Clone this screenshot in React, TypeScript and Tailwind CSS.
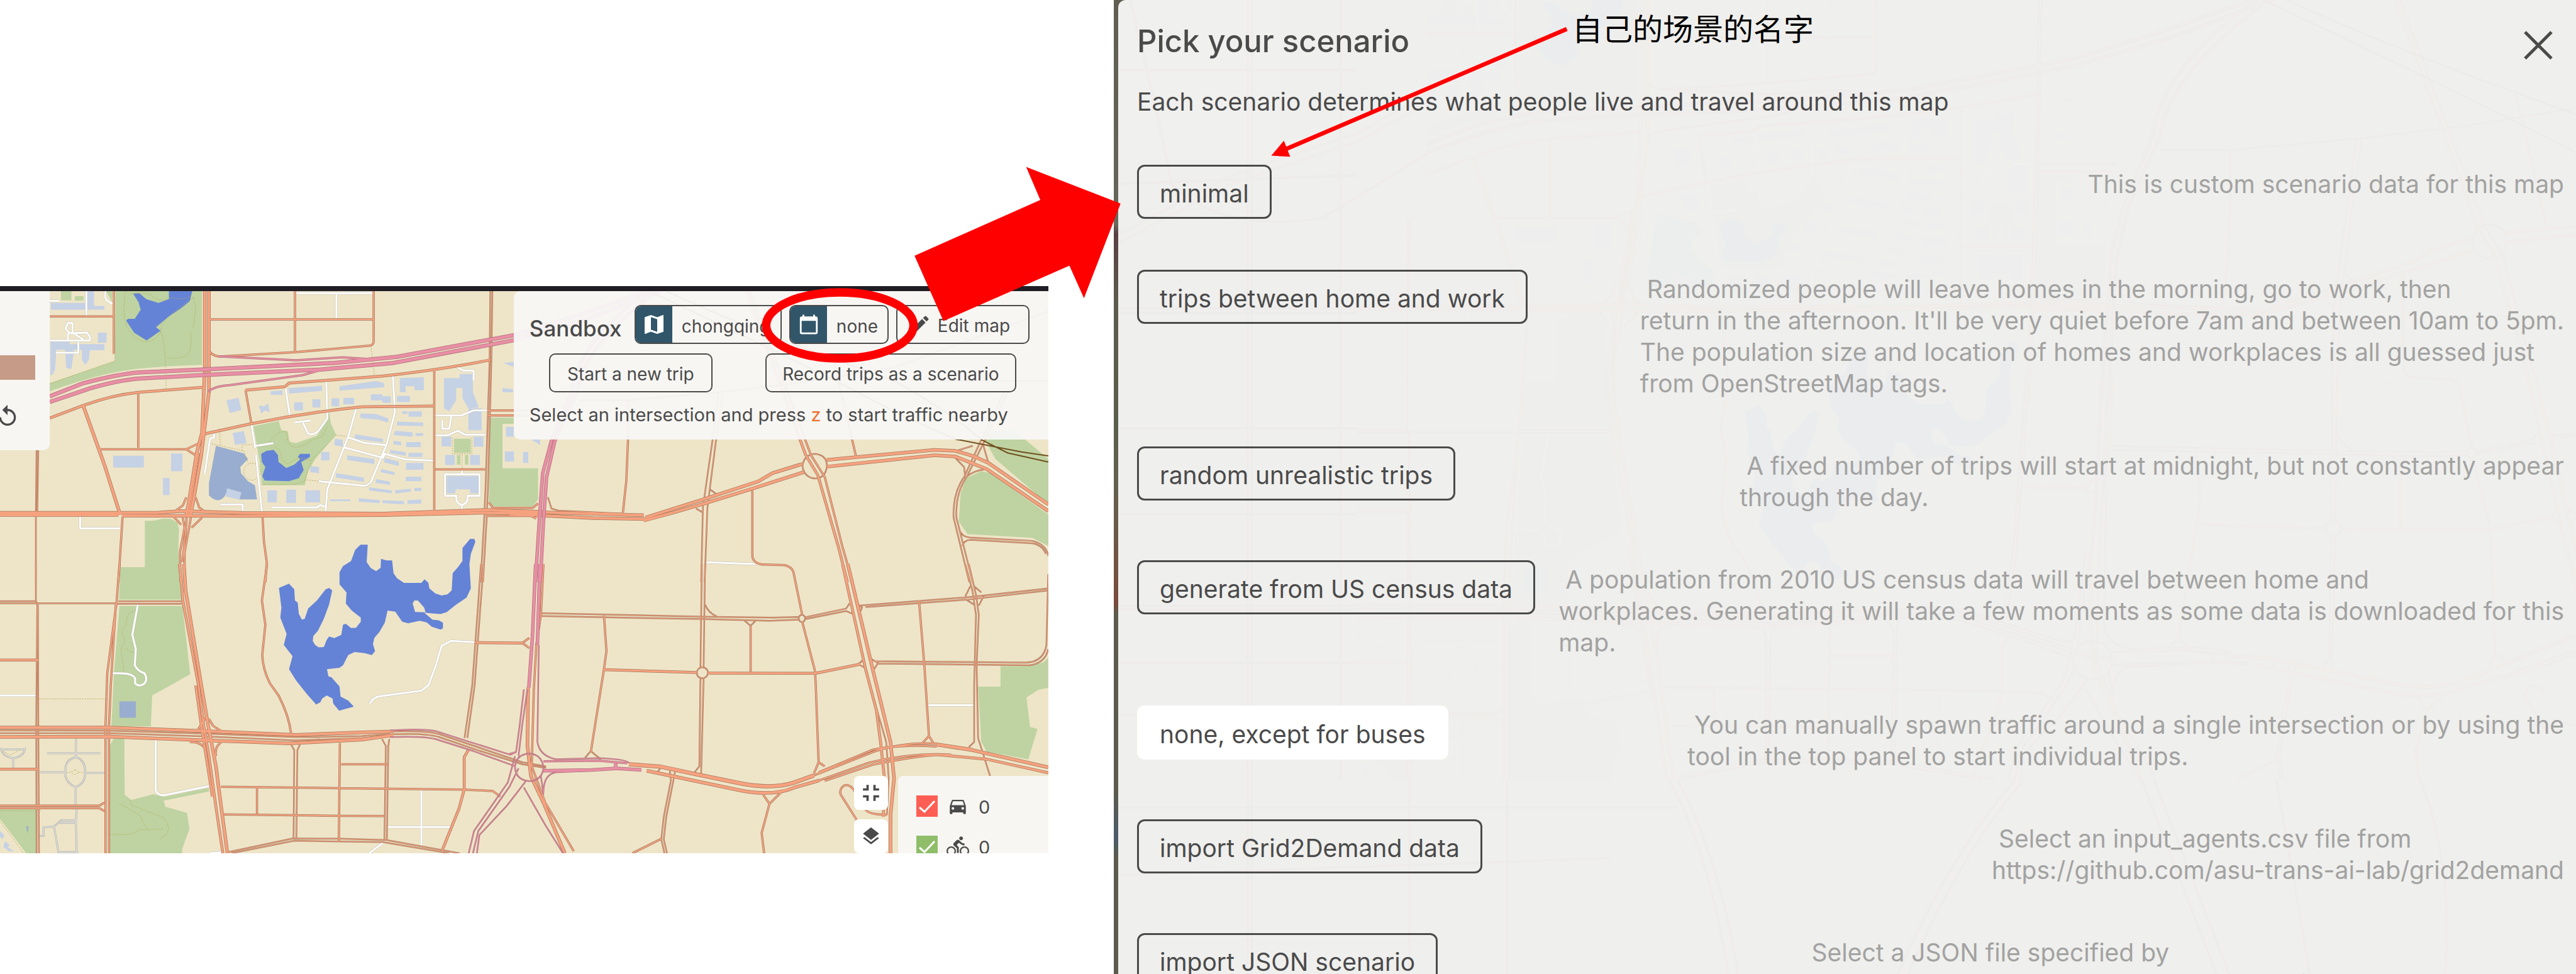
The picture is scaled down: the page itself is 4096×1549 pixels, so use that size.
import React from "react";
import {
  MdCalendarToday,
  MdDirectionsBike,
  MdDirectionsCar,
  MdEdit,
  MdFullscreenExit,
  MdLayers,
  MdMap,
  MdReplay,
} from "react-icons/md";

/* ------------------------------------------------------------------ map */

// The map is drawn as four tiles; each tile has its own local coordinates.
const TILES = {
  nw: "translate(0 460) scale(.57398 .33333)",
  ne: "translate(840 460) scale(.57398 .33333)",
  sw: "translate(0 930) scale(.57398 .33333)",
  se: "translate(840 930) scale(.58673 .33333)",
};
type Tile = keyof typeof TILES;

const GREENS: [Tile, string][] = [
  ["nw", "M332 60H580V425Q420 435 370 450Q280 470 143 555V515L330 405Z"],
  ["nw", "M175 60H205V105H175ZM215 85H240V107H215ZM305 60H322V115Z"],
  ["nw", "M728 728L800 702L808 748L826 752L832 805L850 812L910 775L940 700L945 655L950 715L965 770L905 890L885 950L875 1020H752L745 900Z"],
  ["nw", "M1304 790H1352V860H1304ZM1312 870h10v48h-10zM1335 870h10v48h-10z"],
  ["nw", "M1408 686H1475V716H1443V936H1545V1090L1530 1125H1415L1404 1105Z"],
  ["nw", "M416 1196H440L465 1186H490L510 1205L514 1240Q510 1350 515 1410L522 1586H342L345 1425H416Z"],
  ["sw", "M343 207H524L546 545L437 650L433 802H320L327 540Z"],
  ["sw", "M328 857H357L358 1140L377 1167L440 1138L470 1152L600 1107V1125L470 1170L475 1200L537 1230L544 1310L523 1410V1430H315V900Z"],
  ["sw", "M0 1213H103V1430H75L0 1260Z"],
  ["ne", "M1350 750H1450L1547 890V1115L1395 890Z"],
  ["ne", "M1310 985L1355 950L1380 960L1547 1165V1320L1500 1280L1315 1262L1290 1200L1295 1060Z"],
  ["se", "M1513 463V612L1485 622L1452 660L1462 805L1483 815L1457 966L1340 927L1325 880L1316 606H1379V505H1460L1500 485Z"],
];

const WATERS: [Tile, string][] = [
  ["nw", "M382 72L400 70L420 100L455 118L485 100V60H552L545 110L520 145L485 185L448 238L461 256L421 304L385 265L362 205L368 197L387 197L404 152L398 115Z"],
  ["nw", "M750 865L765 850L786 845L798 870L800 905L822 935L845 918L862 892L855 880L862 865H890V880L865 905L872 945L858 985L830 1000L760 997L753 975L762 930L752 905Z"],
  ["sw", "M1035 -96H1056L1053 -10L1065 20L1080 35L1093 18L1094 -26L1110 -18L1126 -18L1130 45L1140 70L1160 93H1210L1219 75L1230 92L1233 120L1250 145L1268 155L1285 150L1297 130L1300 45L1315 15L1328 -15V-80L1350 -125L1362 -125L1365 -110L1352 -50L1348 0L1352 120L1340 165L1310 200L1282 238L1265 247L1240 244L1218 240L1242 275L1260 278L1272 290V318L1265 324L1240 310L1225 288L1205 280L1172 293L1155 285L1135 235L1113 230L1105 290L1090 335L1075 365L1071 395L1077 430L1068 450L1045 440L1018 435L1000 450L985 500L975 513L939 520L943 555L952 560L975 605L978 655L1000 675L1016 705L974 725L957 690L955 665L938 650L925 665L920 683L908 695L880 640L850 575L830 520L840 455L815 400L823 345L805 265L808 215L801 118L830 97L845 125L847 180L855 190L858 245L867 275L875 270L885 220L910 180L935 125L945 118L954 130L945 200L930 270L913 330L900 355L898 380L905 400L915 412L930 410L938 375L945 358L960 366L980 350L985 300L993 295L1008 316L1022 315L1036 285V265L1010 230L993 195L995 140L975 100V40L985 10L1008 -15L1020 -70ZM1185 195L1190 180L1200 180L1218 215L1222 238L1192 237Z"],
];

const POOLS: [Tile, string][] = [
  ["nw", "M620 825L700 862L712 890L690 930L692 960L712 1000L732 1020L738 1090H685L655 1040L645 1075Q625 1115 600 1070V1010Z"],
  ["sw", "M343 679H390V760H343Z"],
  ["sw", "M75 1297h7l-3 36z"],
];

const BUILDINGS: [Tile, string][] = [
  ["nw", "M146 118H250V60H270V133H300V152H146ZM145 310H200V322H300V352H258L255 400L245 425L235 400V350H213L205 445L190 440L187 350H162L158 450L150 475H145ZM281 265h25v50h-25zM325 874h88v58h-88zM491 863h33v88h-33zM468 984h19v84h-19z"],
  ["nw", "M650 600L685 588L693 648L660 663ZM743 625L758 630L770 615L772 640L775 660L762 650L750 665ZM777 555l34-4v22h-34zM828 540L925 528V553L830 567ZM975 530L1080 505L1103 515V535L975 552ZM1148 490L1217 486V550H1190V530H1165V560H1148Z"],
  ["nw", "M845 610h25v40h-25zM897 595h23v40h-23zM952 590h22v40h-22zM986 588h31v32h-31zM1065 570H1098V580H1122V612H1098V600H1065ZM1140 578h37v30h-37zM1275 490H1320V470H1358V560L1375 635L1345 640L1328 590V540H1310V600L1290 655L1275 640ZM1345 640h38v108h-38z"],
  ["nw", "M1268 780h28v48h-28zM1360 780h28v50h-28zM1278 870h28v50h-28zM1350 870h28v50h-28zM1283 975H1375V1060H1350V1040H1308V1060H1283ZM668 762L700 752L708 812L675 820ZM652 1035L693 1055L688 1092L648 1075ZM768 1045h27v60h-27zM822 1042h28v65h-28zM877 1045h42v60h-42z"],
  ["nw", "M1035 665L1080 668L1115 690V710L1085 695L1035 688ZM1155 655h15v12h-15zM1173 655h38v26h-38zM1140 705l75 5v18l-75-3zM1135 750l50 8v22l-55-8zM1193 762h22v14h-22zM1130 800l22 5v18l-22-5zM1166 806h42v25h-42zM1120 845l45 12v18l-45-14zM1173 860h40v20h-40zM1105 885l40 18v22l-42-18zM1166 910h50v33h-50zM1095 940l38 16v14l-40-14zM1165 978h45v22h-45zM1080 990l40 12v16l-42-10zM1060 1030l65 16v14l-65-14zM1135 1045l45-8v14l-45 10zM1190 1033h20v16h-20z"],
  ["nw", "M1020 768L1100 790V808L1018 790ZM997 872L1075 890V915L997 895ZM965 960L1045 982V1003L965 982ZM948 1090h58v9h-58zM1030 1085l60 8v16l-60-8zM1098 1095l62 3v16l-62-6zM1170 1095l40-5v20l-40 3zM962 790l22 5v35l-24-8zM922 855h24v42h-24zM892 925l24 4v32l-26-6zM1453 732h22v48h-22zM1450 853h26v50h-26zM1502 855h15v55h-15zM1525 793h26v28zM1443 540l30 5v15h-30zM1445 415l30-5v25z"],
  ["sw", "M0 1320l12 20l-4 20l-8-10zM14 1370l14 20l-6 10l18 20h-14l-16-20z"],
];

const WHITE_ROADS: [Tile, string][] = [
  ["nw", "M302 60V90Q305 115 325 122M248 60V185M848 70H1073M966 70V195M143 304H258V285L250 265L200 268L188 245L195 218H208V265L240 300M195 268V304M143 108H170M160 365H225V310"],
  ["nw", "M820 540L832 675M937 508L940 690L915 750Q900 775 885 765L870 710M845 710L892 700M1128 475L1134 660L1110 820L1065 1005Q1055 1025 1040 1022L915 1000M1023 640L1000 780L940 1040L935 1148M1000 783L1045 810L1108 822M988 833L1100 885L1105 865L1165 893L1245 898"],
  ["nw", "M722 716L733 835M735 825L785 812M735 870L752 1150M633 1115H697V1150M780 1130H910L920 1118L937 1128M588 962L603 790L615 782V765M1310 433L1330 453H1360V503M1250 675H1325L1360 650H1398M1250 773H1285L1315 750L1335 770H1395M1270 698V740H1290L1296 680"],
  ["nw", "M1327 945V965M1278 1072V966H1377V1072H1343Q1345 1110 1326 1118Q1308 1110 1310 1072H1278M1326 1118V1140M230 1160V1233H346"],
  ["sw", "M396 197L380 350L390 420L387 500Q395 530 415 540Q425 570 415 590Q400 610 388 590V565Q380 540 345 540H317M0 650H103M1062 690Q1068 665 1085 655L1210 626L1230 600L1250 510L1268 405L1295 380L1362 386"],
  ["sw", "M447 867V1120Q455 1145 470 1143L600 1098M1210 1117V1392M1113 1300H1293M1060 1430L1100 1378M602 1430L640 1425"],
  ["ne", "M565 1401L705 1410"],
  ["se", "M1175 698H1303"],
];

const GREY_PATHS: [Tile, string][] = [
  ["sw", "M218 855V955Q190 965 188 1010V1050Q195 1090 217 1102Q240 1090 244 1050V1010Q240 965 218 955M217 1102V1195M135 936H288M115 1030H188M244 1033H303M3 908Q5 950 38 960Q70 950 72 908M38 960V1012M8 916H70M220 1208L218 1280L220 1430M113 1345H125V1302L155 1298L175 1268H220M170 1280H220M155 1298L168 1425H225"],
];

const TRAILS: [Tile, string][] = [
  ["nw", "M360 60Q350 180 365 240Q390 310 421 312Q450 300 461 262Q475 290 477 540M461 262Q460 220 485 185L555 90M547 265Q552 340 540 370Q520 400 480 388M375 75Q430 60 440 90Q470 120 490 90Q530 110 550 80M555 90L562 140L555 245M330 375V405L143 518M1065 330L1075 475M630 740L633 820M608 815L700 850L712 910M695 850V820L735 818"],
  ["nw", "M724 910Q748 915 748 953Q745 990 724 995Q702 990 700 953Q702 915 724 910M775 805Q800 740 825 760Q820 830 850 832Q880 825 890 800L925 780L940 730M790 830Q810 850 808 890L825 915L858 885L895 895M965 772L995 778M965 772L895 895L875 992L915 1000M752 1015H850L878 995M1300 785V865H1355V785M1327 868V940"],
  ["sw", "M390 230Q360 240 363 300Q340 330 360 380Q340 420 352 470L356 540M360 415L375 435L388 437M113 667H303M343 1185L400 1240L422 1310M375 1167V1190L470 1255L485 1300L480 1335L458 1362M315 1337H375L400 1315L470 1310M0 1220H118M0 1270L68 1430M190 1030H205M225 1030H242M215 1018Q225 1020 224 1032Q215 1048 206 1032Q206 1020 215 1018M8 925L30 945L55 920"],
];

const ORANGE: [Tile, number, string][] = [
  ["nw", 1, "M105 845L103 1160V1500M110 845L107 1160"],
  ["nw", 2, "M143 185H328M847 60V362M603 200H1073M1073 60V310Q1073 325 1060 330L850 362L640 383Q612 385 603 360M397 562V835M285 842H535L568 815M535 842L560 870M705 550L722 716M1247 448V1155M1250 942H1393M1400 650H1568M1400 675H1568"],
  ["nw", 2, "M327 60V370M754 1178L758 1300L766 1400L762 1500M1395 1172H1525L1540 1185M1404 1105L1415 1132H1530L1545 1110"],
  ["nw", 3, "M143 688L240 625Q320 575 400 560L583 536M590 765L720 716Q880 660 1040 632L1245 628M705 550L818 533L830 515L1100 480Q1280 445 1408 400"],
  ["nw", 1, "M1408 60L1406 400L1395 1000L1390 1200L1380 1500M1414 60L1411 400L1402 1000L1397 1200L1387 1500"],
  ["nw", 4, "M238 622L300 920L345 1165"],
  ["nw", 2, "M352 1175L340 1500"],
  ["nw", 4, "M588 60V450L580 760L565 860L545 1075L535 1170"],
  ["nw", 4, "M600 60V560L590 700L578 870L557 1080L547 1170"],
  ["nw", 2, "M570 860L551 1075L541 1170M525 1180L530 1230L517 1350L518 1500M548 1180L543 1230L530 1350V1500M536 1180L533 1250L524 1400M535 1080L525 1120L505 1145M562 1080L572 1130L588 1150M498 1175L520 1215M580 1180L550 1230"],
  ["nw", 4, "M0 1156H450L520 1148L700 1157L1100 1160L1395 1142L1568 1152"],
  ["nw", 4, "M0 1167H340"],
  ["nw", 4, "M350 1170L700 1172L1100 1168L1390 1156L1568 1162"],
  ["sw", 1, "M0 183H103M0 194H330M340 184H522M332 196H522M103 0V180L107 200L104 800L105 1430M109 200L110 800L112 1430M1389 0L1380 200L1363 600L1342 860M1381 0L1373 200L1356 600L1334 860"],
  ["sw", 2, "M343 0L335 185L308 540L303 800V1430M333 190L318 600L313 800V1430"],
  ["sw", 3, "M515 0L520 70L525 180L570 600L585 800L600 950L620 1200L640 1430"],
  ["sw", 4, "M528 0L533 130L578 600L598 800L620 1000L635 1200L653 1430"],
  ["sw", 3, "M562 600L580 820L592 950L610 1150"],
  ["sw", 2, "M767 0L762 60L752 180L762 300L753 450Q755 520 775 590L800 650Q830 750 836 840"],
  ["sw", 4, "M0 808H310L580 825L850 845L1040 832L1130 828"],
  ["sw", 1, "M0 822L310 824L580 838L850 856L1040 850L1120 840M0 836L310 836L580 852L850 872L1040 860L1120 850"],
  ["sw", 4, "M0 855L320 853L560 870L830 887L1040 868L1130 846"],
  ["sw", 1, "M1130 828Q1220 824 1260 840L1380 910L1500 980L1568 1000M1130 842Q1220 835 1260 855L1380 925L1500 990L1568 1008"],
  ["sw", 3, "M0 475H110M0 1014H110M1365 388L1500 391M1345 920L1333 955V1115L1318 1210L1270 1415"],
  ["sw", 2, "M1500 390L1520 365M1500 390L1520 415M0 1195H285L300 1180M0 1207H285L300 1222"],
  ["sw", 2, "M976 885L973 1370M980 990H1113M635 1101L975 1108L1330 1115L1415 1122L1437 1150M738 1105V1235M642 1238L970 1245L1103 1246"],
  ["sw", 1, "M835 890L845 920L843 1357M862 890L854 920L851 1357M1097 865L1108 900L1104 1365M1118 865L1115 900L1111 1365M655 1425L840 1357L975 1358L1110 1365L1320 1430M665 1430L845 1368L1100 1375L1290 1430"],
  ["sw", 2, "M590 760L568 820M600 765L612 800L635 825M545 880Q590 880 592 940M640 875Q615 900 620 950"],
  ["se", 4, "M52 610L50 900L60 1050L95 1180L155 1430"],
  ["se", 2, "M95 0L88 250L75 400L68 620L62 1000L100 1180L180 1420"],
  ["se", 1, "M90 243L540 260L740 265L810 262M90 257L540 272L730 280L810 275M821 250Q830 255 830 268Q829 285 821 287Q812 283 812 268Q812 255 821 250M832 262L945 220L955 195M832 272L945 232L962 245"],
  ["se", 2, "M265 255L272 430L265 520L228 930"],
  ["se", 3, "M265 522L525 536M558 539L860 540L985 495"],
  ["se", 1, "M228 925L212 958M228 925L256 965M541 510Q557 515 557 537Q556 563 541 565Q526 563 526 537Q526 515 541 510M540 0L536 510M549 0L545 510M536 565L533 1000L520 1028M545 565L538 1035M660 280L677 305L690 282M549 200Q560 245 582 258"],
  ["se", 2, "M677 305V535M822 285L858 530L860 600L868 980L855 1035M868 980L885 1000"],
  ["se", 3, "M935 0L1000 520L1030 720L1042 880L1053 1060L1050 1250"],
  ["se", 4, "M950 0L1020 520L1070 880L1080 1060L1070 1240V1430"],
  ["se", 1, "M1020 650L1058 880L1065 1060L1060 1240M985 205L1280 165L1513 120M1000 213L1290 175L1513 130M975 195L990 215L985 235M1280 0L1300 130L1310 250L1305 600V880L1290 905M1290 0L1310 150L1318 250L1312 500L1316 860L1350 1050M1280 160L1294 110M1325 140L1305 110M1285 178L1308 205M1332 158L1318 205"],
  ["se", 2, "M1150 180L1165 500L1178 850M1178 850L1160 885M1178 850L1190 885"],
  ["se", 1, "M1025 480L1200 483L1450 487Q1500 485 1508 400L1513 50M1035 492L1460 500Q1505 490 1513 420M1012 465L1035 490L1022 525M995 470L980 495L1000 515"],
  ["se", 5, "M335 990L425 1002L520 1038L650 1085Q740 1115 800 1080L855 1045"],
  ["se", 2, "M855 1045L1020 930Q1100 880 1200 888L1300 915M868 1030L1020 918Q1100 890 1200 902"],
  ["se", 4, "M1200 893L1300 920L1513 1005"],
  ["se", 4, "M385 1022L650 1120Q740 1150 800 1105L870 1070"],
  ["se", 2, "M870 1070L1010 982Q1140 930 1240 943M885 1072L1020 992Q1140 950 1210 943"],
  ["se", 3, "M1200 942L1340 965L1513 1032"],
  ["se", 1, "M450 1020L453 1070L433 1250L426 1360L435 1430M465 1020L460 1070L440 1250L433 1360L442 1430M425 1005L415 1030L390 1022"],
  ["se", 2, "M425 1360L345 1430M712 1140L730 1185L708 1330L715 1430M762 1130L730 1185M975 1265L930 1140Q925 1115 940 1095Q955 1085 970 1125M1000 1215Q1010 1240 1060 1240"],
  ["ne", 2, "M697 1045V1370Q700 1410 730 1412L790 1415Q812 1425 815 1450L840 1660M930 400L995 880M340 600V793L335 1000L325 1160"],
  ["ne", 4, "M840 915L755 960L715 1000L565 1085L390 1180"],
  ["ne", 4, "M845 955L700 1035L560 1110L470 1155L385 1195"],
  ["ne", 4, "M0 1150L110 1155L385 1168M0 1162L240 1183L390 1187"],
  ["ne", 1, "M876 865Q911 870 911 925Q908 985 876 987Q845 980 841 925Q845 870 876 865M600 560L583 793L555 1130L550 1500M612 560L593 793L568 1130L560 1500M575 1040L595 1065M535 1135L555 1155"],
  ["ne", 4, "M910 895L1000 880L1220 845L1280 850L1330 875L1375 910L1547 1115"],
  ["ne", 4, "M912 928L1220 872L1280 878L1370 940L1547 1148"],
  ["ne", 3, "M680 60L850 870L885 970L945 1330L970 1500"],
  ["ne", 2, "M690 60L865 870L905 980L955 1320L985 1500"],
  ["ne", 1, "M1420 560L1355 793L1305 980Q1272 1060 1275 1180L1320 1500M1430 560L1366 793L1312 980Q1280 1060 1283 1180L1330 1500M1295 1250Q1300 1275 1320 1278L1500 1295Q1540 1310 1547 1370M1300 1320Q1305 1290 1325 1290L1500 1307Q1530 1315 1540 1360M1283 850L1330 825M1280 885L1305 930L1308 975M1358 810L1375 910M1375 940Q1330 945 1308 985"],
  ["ne", 1, "M200 600H340L600 560L800 520L1100 440L1547 160M1547 505H1200M110 1080L120 1135L140 1145L320 1160"],
];

const PINK: [Tile, number, string][] = [
  ["nw", 5, "M143 580L240 515Q340 470 400 462L580 448L960 415L1140 385L1475 278L1660 180L1860 60"],
  ["nw", 5, "M143 608L260 540Q340 500 400 492L580 475L920 448L1130 415L1475 303L1680 200L1900 60"],
  ["nw", 2, "M628 383L850 402L985 387L1065 397M598 558Q615 530 660 525L870 475L915 453"],
  ["ne", 4, "M400 60Q200 300 180 550L120 800L95 960L85 1200L74 1500"],
  ["ne", 4, "M425 60Q215 320 195 550L130 800L106 980L97 1200L88 1500"],
  ["se", 4, "M73 0L64 360L54 610"],
  ["se", 4, "M85 0L78 400"],
  ["se", 1, "M55 937Q90 940 95 1005Q92 1070 55 1073Q18 1068 15 1005Q18 940 55 937M82 400L78 880Q85 950 130 965L250 960Q330 965 335 985M40 620L28 800L18 930L0 945M50 620L35 800L25 950M95 1130Q95 1040 130 1030L230 1022M15 950L-5 1080L-100 1320L-115 1430M25 1010L0 1100L-88 1320L-103 1430M45 1075L-10 1200L-85 1340L-92 1430M40 1105L100 1290L150 1430M88 1050L95 1140"],
  ["se", 2, "M95 975L250 972L330 985"],
  ["se", 4, "M95 1022L230 1018L300 1010L370 1018M298 985V1010"],
  ["sw", 1, "M1120 823Q1200 812 1250 825L1350 880L1460 940L1480 930M1120 856Q1210 850 1250 865L1360 925L1480 1000"],
];

const RAILS: [Tile, string][] = [
  ["ne", "M400 60Q700 300 1000 560Q1150 700 1283 793L1470 855L1547 875M450 60Q700 260 1100 500Q1250 640 1355 795L1430 860L1547 905"],
];

function Areas({ items, fill }: { items: [Tile, string][]; fill: string }) {
  return (
    <g fill={fill} fillRule="evenodd">
      {items.map(([t, d], i) => (
        <path key={i} d={d} transform={TILES[t]} />
      ))}
    </g>
  );
}

function Lines({ items, stroke, width, dash }: { items: [Tile, string][]; stroke: string; width: number; dash?: string }) {
  return (
    <g fill="none" stroke={stroke} strokeWidth={width} strokeDasharray={dash}>
      {items.map(([t, d], i) => (
        <path key={i} d={d} transform={TILES[t]} vectorEffect="non-scaling-stroke" />
      ))}
    </g>
  );
}

function Roads({ items, edge, fill }: { items: [Tile, number, string][]; edge: string; fill: string }) {
  return (
    <g fill="none" strokeLinejoin="round">
      {items.map(([t, w, d], i) => (
        <path key={`e${i}`} d={d} transform={TILES[t]} stroke={edge} strokeWidth={w + 1.5} vectorEffect="non-scaling-stroke" />
      ))}
      {items.map(([t, w, d], i) => (
        <path key={`f${i}`} d={d} transform={TILES[t]} stroke={fill} strokeWidth={w} vectorEffect="non-scaling-stroke" />
      ))}
    </g>
  );
}

function MapArt() {
  return (
    <g>
      <Areas items={GREENS} fill="#bed3a1" />
      <Areas items={WATERS} fill="#6483d7" />
      <Areas items={POOLS} fill="#98adcf" />
      <Areas items={BUILDINGS} fill="#c5d1e5" />
      <Lines items={TRAILS} stroke="#b9ad62" width={1} dash="2 2" />
      <Lines items={GREY_PATHS} stroke="#b5b5b0" width={3} />
      <Lines items={GREY_PATHS} stroke="#f1f1ee" width={1} />
      <Lines items={WHITE_ROADS} stroke="#bdbbb0" width={4} />
      <Lines items={WHITE_ROADS} stroke="#ffffff" width={3} />
      <Roads items={ORANGE} edge="#a3775c" fill="#f7a27f" />
      <Roads items={PINK} edge="#ad6f78" fill="#e98fa5" />
      <Lines items={RAILS} stroke="#70501f" width={2} />
    </g>
  );
}

// Streets that lie beyond the edges of the detailed tiles.
function OuterStreets() {
  return (
    <g fill="none" stroke="#c99a86" strokeWidth="3">
      <path d="M-270 480Q-240 600 -220 700Q-160 760 -40 740L90 660M-130 480V1640M-125 480V1640M-20 480V1407M-283 565H0M-283 700L0 690M-283 848H0M-283 853H0M-283 990H0M-283 1092H0M-283 1200H0M-283 1205H0M-283 1268H0M-283 1330H0M-283 1440H380M-283 1520L300 1500M62 1407V1640M178 1407V1640M370 1407Q420 1500 440 1640M380 1407Q430 1500 452 1640M780 1407Q700 1500 640 1640M790 1407Q712 1500 652 1640M930 1407L1020 1640M945 1407L1035 1640M1090 1407L1130 1640M1260 1407Q1300 1500 1290 1640M1465 1407V1640" />
      <path d="M-283 760L-150 690L0 640L90 590M-283 770L-150 700L0 650L90 600" stroke="#e98fa5" />
    </g>
  );
}

/* ------------------------------------------------------------- left side */

const outline = "rounded-[10px] border-2 border-[#4a4a4a] text-[28px] leading-[36px] text-[#4a4a4a]";

function SandboxPanel() {
  return (
    <section
      aria-label="Sandbox"
      className="absolute top-0 right-0 w-[51%] rounded-l-[10px] bg-[#f7f7f5]/95 pt-[22px] pb-[19px] pl-[25px] text-[#4a4a4a]"
    >
      <div className="flex items-center">
        <h2 className="w-[167px] pt-3 text-[35px] leading-[44px] font-medium">Sandbox</h2>
        <div className="flex gap-3">
          <button className={`${outline} flex h-[62px] w-[234px] items-stretch overflow-hidden`}>
            <span className="flex w-[58px] items-center justify-center bg-[#31566a]">
              <MdMap className="size-[40px] text-white" />
            </span>
            <span className="pt-3.5 pl-[15px]">chongqing</span>
          </button>
          <button className={`${outline} flex h-[62px] w-[158px] items-stretch overflow-hidden`}>
            <span className="flex w-[58px] items-center justify-center bg-[#31566a]">
              <MdCalendarToday className="size-[34px] text-white" />
            </span>
            <span className="pt-3.5 pl-[15px]">none</span>
          </button>
          <button className={`${outline} flex h-[62px] w-[212px] items-center gap-2.5 pl-[18px]`}>
            <MdEdit className="size-[36px]" />
            <span className="pt-1">Edit map</span>
          </button>
        </div>
      </div>
      <div className="flex gap-[84px] pt-[15px] pl-[31px]">
        <button className={`${outline} h-[62px] w-[260px] pt-1`}>Start a new trip</button>
        <button className={`${outline} h-[62px] w-[399px] pt-1`}>Record trips as a scenario</button>
      </div>
      <p className="pt-4 text-[29px] leading-[40px] whitespace-nowrap">
        Select an intersection and press <span className="text-[#ee702e]">z</span> to start traffic nearby
      </p>
    </section>
  );
}

function LayerToggle({ label, color, icon }: { label: string; color: string; icon: React.ReactNode }) {
  return (
    <div className="flex h-[34px] items-center text-[#4a4a4a]">
      <label className="relative block size-[34px]">
        <input type="checkbox" defaultChecked aria-label={label} className={`block size-[34px] appearance-none ${color}`} />
        <svg viewBox="0 0 34 34" className="pointer-events-none absolute inset-0 size-full">
          <path d="M5 19L13 26L29 9" fill="none" stroke="#fff" strokeWidth="3" />
        </svg>
      </label>
      <span className="ml-[14px] flex w-[36px] justify-center">{icon}</span>
      <span className="ml-[15px] pt-1 text-[29px] leading-[34px]">0</span>
    </div>
  );
}

function MapWindow() {
  return (
    <section aria-label="Map" className="relative overflow-hidden border-t-8 border-[#201d24] bg-[#eee5c8]">
      <svg viewBox="0 480 1728 927" className="block w-full" role="img" aria-label="Street map">
        <MapArt />
      </svg>

      <aside className="absolute top-0 left-0 flex h-[253px] w-[79px] flex-col rounded-br-[10px] bg-[#f7f7f5]/95 pt-[102px]">
        <div className="h-[39px] w-[56px] bg-[#c69c88]" />
        <button aria-label="Reset" className="mt-[38px] -ml-[8px] w-[40px]">
          <MdReplay className="size-[40px] text-[#4a4a4a]" />
        </button>
      </aside>

      <SandboxPanel />

      <div className="absolute right-0 bottom-0 flex h-[123px] w-[309px] gap-4">
        <div className="flex w-[54px] shrink-0 flex-col gap-[15px]">
          <button aria-label="Zoom to fit" className="flex size-[54px] items-center justify-center rounded-lg bg-white">
            <MdFullscreenExit className="size-[44px] text-[#4a4a4a]" />
          </button>
          <button aria-label="Layers" className="flex size-[54px] items-center justify-center rounded-lg bg-white">
            <MdLayers className="size-[34px] text-[#4a4a4a]" />
          </button>
        </div>
        <div className="flex grow flex-col gap-[30px] overflow-hidden rounded-tl-lg bg-[#f7f7f5]/95 pt-[31px] pl-[29px]">
          <LayerToggle label="Cars" color="bg-[#ff5e54]" icon={<MdDirectionsCar className="size-[34px]" />} />
          <LayerToggle label="Bikes" color="bg-[#8fbd69]" icon={<MdDirectionsBike className="size-[36px]" />} />
        </div>
      </div>
    </section>
  );
}

/* ------------------------------------------------------------ right side */

const SCENARIOS: { name: string; lines: string[]; current?: boolean }[] = [
  { name: "minimal", lines: ["This is custom scenario data for this map"] },
  {
    name: "trips between home and work",
    lines: [
      " Randomized people will leave homes in the morning, go to work, then",
      "return in the afternoon. It'll be very quiet before 7am and between 10am to 5pm.",
      "The population size and location of homes and workplaces is all guessed just",
      "from OpenStreetMap tags.",
    ],
  },
  {
    name: "random unrealistic trips",
    lines: [" A fixed number of trips will start at midnight, but not constantly appear", "through the day."],
  },
  {
    name: "generate from US census data",
    lines: [
      " A population from 2010 US census data will travel between home and",
      "workplaces. Generating it will take a few moments as some data is downloaded for this",
      "map.",
    ],
  },
  {
    name: "none, except for buses",
    current: true,
    lines: [
      " You can manually spawn traffic around a single intersection or by using the",
      "tool in the top panel to start individual trips.",
    ],
  },
  {
    name: "import Grid2Demand data",
    lines: [" Select an input_agents.csv file from", "https://github.com/asu-trans-ai-lab/grid2demand"],
  },
  {
    name: "import JSON scenario",
    lines: [" Select a JSON file specified by", "https://a-b-street.github.io/docs/tech/dev/formats/scenarios.html"],
  },
];

function ScenarioPicker() {
  return (
    <section
      aria-labelledby="picker-title"
      className="overflow-hidden bg-[linear-gradient(#5f5e50_0%,#66655a_21%,#6a6a5c_23%,#5a3f44_24%,#5c5b4c_31%,#5a5f4a_44%,#63614f_50%,#7a4b3a_62%,#5c5b4c_63%,#5c5b4c_81%,#4a5b6a_86%,#5c5b4c_88%,#5c5b4c_100%)] pl-[7px]"
    >
      <div className="relative h-full overflow-hidden rounded-tl-[12px] bg-[#f0f0ef] pt-9 pr-[19px] pl-[30px]">
        <svg
          viewBox="1843 0 2403 1606"
          preserveAspectRatio="xMinYMin slice"
          className="pointer-events-none absolute inset-0 size-full opacity-3"
          aria-hidden="true"
        >
          <rect x="1843" width="2403" height="1606" fill="#eee5c8" />
          <g transform="translate(2237 -670) scale(1.39)">
            <MapArt />
            <OuterStreets />
          </g>
        </svg>
        <div className="relative flex flex-col gap-[75px]">
          <header className="flex flex-col gap-[41px] text-[#4a4a4a]">
            <div className="flex items-start justify-between">
              <h1 id="picker-title" className="text-[49px] leading-[60px] font-medium">
                Pick your scenario
              </h1>
              <button aria-label="Close" className="mt-[13px] mr-[18px]">
                <svg viewBox="0 0 46 46" className="size-[46px]">
                  <path d="M2 2L44 44M44 2L2 44" stroke="#4a4a4a" strokeWidth="5" />
                </svg>
              </button>
            </div>
            <p className="text-[39px] leading-[50px]">
              Each scenario determines what people live and travel around this map
            </p>
          </header>
          {SCENARIOS.map((s) => (
            <div key={s.name} className="flex min-h-[92px] items-start justify-between text-[39px] leading-[50px]">
              <button
                className={`h-[86px] rounded-[12px] border-[3px] px-[33px] pt-1.5 whitespace-nowrap text-[#4a4a4a] ${
                  s.current ? "border-white bg-white" : "border-[#4a4a4a]"
                }`}
              >
                {s.name}
              </button>
              <p className="pt-1.5 whitespace-pre text-[#a2a2a1]">{s.lines.join("\n")}</p>
            </div>
          ))}
        </div>
      </div>
    </section>
  );
}

/* ---------------------------------------------------------------- page */

function Annotations() {
  return (
    <>
      <svg
        viewBox="0 0 4246 1606"
        preserveAspectRatio="xMinYMin meet"
        className="pointer-events-none absolute inset-0 size-full"
        aria-hidden="true"
      >
        <ellipse cx="1384.5" cy="536.5" rx="121.5" ry="54.5" fill="none" stroke="#f00" strokeWidth="14" />
        <path d="M1507.7 421.7L1715 329.7L1691.7 275.3L1847.3 335.7L1787 491.7L1763 438L1555.3 529.3Z" fill="#f00" />
        <path d="M2583 47.8L2115 248" stroke="#f00" strokeWidth="7" />
        <path d="M2095.8 256.7L2116.6 232L2127 258.5Z" fill="#f00" />
      </svg>
      <p className="absolute top-[9px] left-[2500px] font-['Noto_Sans_CJK_SC','Noto_Sans',sans-serif] text-[48px] leading-[68px] whitespace-nowrap text-black">
        自己的场景的名字
      </p>
    </>
  );
}

export default function App() {
  return (
    <main className="relative grid h-screen w-full grid-cols-[1667fr_104fr_2325fr] overflow-hidden bg-white font-['Inter','Noto_Sans',sans-serif]">
      <div className="pt-[455px]">
        <MapWindow />
      </div>
      <div />
      <ScenarioPicker />
      <Annotations />
    </main>
  );
}
